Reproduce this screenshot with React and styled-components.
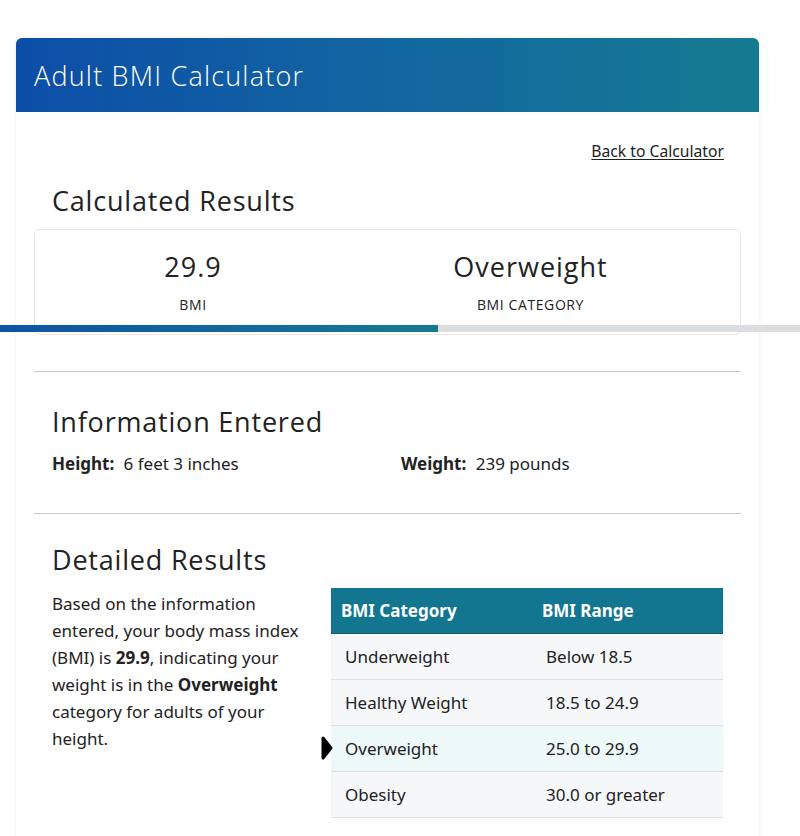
import React from 'react';
import styled, { createGlobalStyle } from 'styled-components';

const GlobalStyle = createGlobalStyle`
  body {
    margin: 0;
    background: #ffffff;
    font-family: 'Noto Sans', 'Lato', sans-serif;
    color: #222222;
  }
`;

const Page = styled.div`
  padding: 38px 41px 0 16px;
`;

const Card = styled.div`
  background: #fff;
  border-radius: 6px 6px 0 0;
  box-shadow: 0 0 4px rgba(0, 0, 0, 0.09);
  min-height: 800px;
`;

const CardHeader = styled.div`
  height: 74px;
  display: flex;
  align-items: center;
  padding: 0 18px;
  border-radius: 6px 6px 0 0;
  background: linear-gradient(90deg, #0c4ea8 0%, #1266a1 50%, #157b90 100%);
  color: #fff;
  font-family: 'Open Sans', sans-serif;
  font-weight: 300;
  font-size: 27px;
  letter-spacing: 1.2px;
`;

const CardBody = styled.div`
  padding: 28px 18px;
`;

const BackRow = styled.div`
  display: flex;
  justify-content: flex-end;
  padding-right: 17px;
`;

const BackLink = styled.a`
  font-size: 15.7px;
  line-height: 22px;
  color: #222;
  text-decoration: underline;
  text-underline-offset: 2px;
`;

const SectionTitle = styled.h2`
  margin: ${p => p.$top}px 0 ${p => p.$bottom}px;
  padding-left: 18px;
  font-family: 'Open Sans', sans-serif;
  font-weight: 400;
  font-size: 27px;
  line-height: 36px;
  letter-spacing: 0.8px;
  color: #222;
`;

const ResultBox = styled.div`
  position: relative;
  display: grid;
  grid-template-columns: 316px 1fr;
  padding: 19px 30px 19px 0;
  border: 1px solid #f1e3de;
  border-radius: 6px;
`;

const ResultCol = styled.div`
  display: flex;
  flex-direction: column;
  align-items: center;
  gap: 10px;
`;

const ResultValue = styled.div`
  font-family: 'Open Sans', sans-serif;
  font-size: 27px;
  font-weight: 500;
  line-height: 36px;
  letter-spacing: 1px;
`;

const ResultLabel = styled.div`
  font-family: 'Open Sans', sans-serif;
  font-size: 14px;
  font-weight: 500;
  line-height: 20px;
  letter-spacing: 0.6px;
  text-transform: uppercase;
`;

const Track = styled.div`
  position: absolute;
  left: -35px;
  bottom: 2px;
  width: 800px;
  height: 7px;
  background: #dcdde0;
`;

const Fill = styled.div`
  height: 100%;
  background: linear-gradient(90deg, #0c55a6, #157a94);
`;

const Divider = styled.hr`
  margin: ${p => p.$top}px 0 0;
  border: 0;
  border-top: 1px solid #c9c9c9;
`;

const InfoRow = styled.div`
  display: grid;
  grid-template-columns: 349px 1fr;
  padding-left: 18px;
  font-size: 17px;
  line-height: 24px;
`;

const InfoItem = styled.div`
  b {
    font-weight: 700;
    margin-right: 5px;
  }
`;

const Details = styled.div`
  display: grid;
  grid-template-columns: 1fr 392px;
  gap: 28px;
  padding: 0 18px;
  align-items: start;
`;

const Paragraph = styled.p`
  margin: 2px 0 0;
  font-size: 17px;
  line-height: 27px;
  b {
    font-weight: 700;
  }
`;

const Table = styled.table`
  width: 100%;
  table-layout: fixed;
  border-collapse: collapse;
  font-size: 17px;
`;

const HeadCell = styled.th`
  box-sizing: border-box;
  background: #137691;
  color: #fff;
  font-weight: 700;
  text-align: left;
  height: 45px;
  padding: 0 10px;
  width: ${p => p.$w || 'auto'};
  border-bottom: 1px solid #0f5d73;
`;

const Row = styled.tr`
  background: ${p => (p.$active ? '#edf8f9' : '#f6f7f9')};
  border-bottom: 1px solid #dedfe1;
`;

const Cell = styled.td`
  position: relative;
  height: 45px;
  padding: 0 14px;
`;

const Marker = styled.svg`
  position: absolute;
  left: -10px;
  top: 50%;
  transform: translateY(-50%);
`;

const ranges = [
  ['Underweight', 'Below 18.5'],
  ['Healthy Weight', '18.5 to 24.9'],
  ['Overweight', '25.0 to 29.9'],
  ['Obesity', '30.0 or greater'],
];

export default function App() {
  const bmi = 29.9;
  const category = 'Overweight';
  const pct = (438 / 800) * 100;

  return (
    <Page>
      <GlobalStyle />
      <Card>
        <CardHeader>Adult BMI Calculator</CardHeader>
        <CardBody>
          <BackRow>
            <BackLink href="#">Back to Calculator</BackLink>
          </BackRow>

          <SectionTitle $top={21} $bottom={10}>Calculated Results</SectionTitle>
          <ResultBox>
            <ResultCol>
              <ResultValue>{bmi}</ResultValue>
              <ResultLabel>BMI</ResultLabel>
            </ResultCol>
            <ResultCol>
              <ResultValue>{category}</ResultValue>
              <ResultLabel>BMI Category</ResultLabel>
            </ResultCol>
            <Track>
              <Fill style={{ width: `${pct}%` }} />
            </Track>
          </ResultBox>

          <Divider $top={36} />

          <SectionTitle $top={32} $bottom={12}>Information Entered</SectionTitle>
          <InfoRow>
            <InfoItem><b>Height:</b> 6 feet 3 inches</InfoItem>
            <InfoItem><b>Weight:</b> 239 pounds</InfoItem>
          </InfoRow>

          <Divider $top={37} />

          <SectionTitle $top={28} $bottom={10}>Detailed Results</SectionTitle>
          <Details>
            <Paragraph>
              Based on the information entered, your body mass index (BMI) is <b>{bmi}</b>, indicating your
              weight is in the <b>{category}</b> category for adults of your height.
            </Paragraph>
            <Table>
              <thead>
                <tr>
                  <HeadCell $w="201px">BMI Category</HeadCell>
                  <HeadCell>BMI Range</HeadCell>
                </tr>
              </thead>
              <tbody>
                {ranges.map(([name, range]) => (
                  <Row key={name} $active={name === category}>
                    <Cell>
                      {name === category && (
                        <Marker width="12" height="24" viewBox="0 0 12 24">
                          <path d="M2 2 L10 12 L2 22 Z" fill="#000" stroke="#000" strokeWidth="3" strokeLinejoin="round" />
                        </Marker>
                      )}
                      {name}
                    </Cell>
                    <Cell>{range}</Cell>
                  </Row>
                ))}
              </tbody>
            </Table>
          </Details>
        </CardBody>
      </Card>
    </Page>
  );
}
